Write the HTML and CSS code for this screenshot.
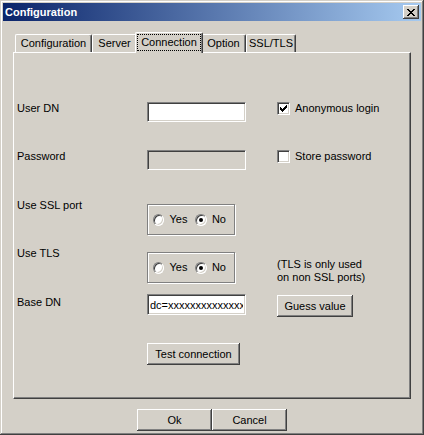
FILE: index.html
```html
<!DOCTYPE html>
<html lang="en">
  <head>
    <title>Configuration</title>
    <meta charset="utf-8" />
    <link rel="stylesheet" href="styles.css">
  </head>
  <body>
    <div class="window">
      <div class="titlebar">
        <span class="title">Configuration</span>
        <span class="close">
          <svg width="8" height="7" viewBox="0 0 8 7" shape-rendering="crispEdges">
            <path d="M0 0h2v1h-2z M6 0h2v1h-2z M1 1h2v1h-2z M5 1h2v1h-2z M2 2h4v1h-4z M3 3h2v1h-2z M2 4h4v1h-4z M1 5h2v1h-2z M5 5h2v1h-2z M0 6h2v1h-2z M6 6h2v1h-2z" fill="#000"/>
          </svg>
        </span>
      </div>

      <div class="client">
        <div class="tabs">
          <div class="tab tab-config">Configuration</div>
          <div class="tab tab-server">Server</div>
          <div class="tab active"><span class="focus">Connection</span></div>
          <div class="tab tab-option">Option</div>
          <div class="tab tab-ssl">SSL/TLS</div>
        </div>

        <div class="panel">
          <div class="row row-user">
            <span class="label">User DN</span>
            <input type="text" class="edit" value="">
            <span class="option">
              <span class="check">
                <svg width="7" height="7" viewBox="0 0 7 7" shape-rendering="crispEdges">
                  <path d="M0 2h1v3h-1z M1 3h1v3h-1z M2 4h1v3h-1z M3 3h1v3h-1z M4 2h1v3h-1z M5 1h1v3h-1z M6 0h1v3h-1z" fill="#000"/>
                </svg>
              </span>
              Anonymous login
            </span>
          </div>

          <div class="row row-password">
            <span class="label">Password</span>
            <input type="password" class="edit" disabled>
            <span class="option">
              <span class="check"></span>
              Store password
            </span>
          </div>

          <div class="row row-ssl">
            <span class="label">Use SSL port</span>
            <div class="group">
              <span class="radio"></span><span class="radio-text">Yes</span>
              <span class="radio on"></span><span class="radio-text">No</span>
            </div>
          </div>

          <div class="row row-tls">
            <span class="label">Use TLS</span>
            <div class="group">
              <span class="radio"></span><span class="radio-text">Yes</span>
              <span class="radio on"></span><span class="radio-text">No</span>
            </div>
            <span class="note">(TLS is only used<br>on non SSL ports)</span>
          </div>

          <div class="row row-base">
            <span class="label">Base DN</span>
            <input type="text" class="edit edit-base" value="dc=xxxxxxxxxxxxxxxxxxxx">
            <button type="button" class="btn btn-guess">Guess value</button>
          </div>

          <div class="row row-test">
            <span></span>
            <button type="button" class="btn btn-test">Test connection</button>
          </div>
        </div>

        <div class="buttons">
          <button type="button" class="btn btn-dialog">Ok</button>
          <button type="button" class="btn btn-dialog">Cancel</button>
        </div>
      </div>
    </div>
  </body>
</html>
```

FILE: styles.css
```css
 body {
   margin: 0;
   background: #d4d0c8;
   font-family: "Liberation Sans", Arial, sans-serif;
   font-size: 11px;
   color: #000;
 }

 .window {
   width: 424px;
   height: 435px;
   box-sizing: border-box;
   padding: 3px;
   background: #d4d0c8;
   overflow: hidden;
   box-shadow: inset -1px -1px #404040, inset 1px 1px #d4d0c8,
               inset -2px -2px #808080, inset 2px 2px #fff;
 }

 /* title bar */
 .titlebar {
   height: 18px;
   display: flex;
   align-items: center;
   background: linear-gradient(to right, #0a246a, #a6caf0);
 }

 .title {
   padding-left: 2px;
   color: #fff;
   font-weight: bold;
   font-size: 11px;
 }

 .close {
   margin-left: auto;
   margin-right: 2px;
   width: 16px;
   height: 14px;
   display: flex;
   align-items: center;
   justify-content: center;
   background: #d4d0c8;
   box-shadow: inset -1px -1px #404040, inset 1px 1px #fff, inset -2px -2px #808080;
 }

 .close svg {
   display: block;
 }

 .client {
   padding: 11px 10px 0 10px;
 }

 /* tabs */
 .tabs {
   height: 20px;
   display: flex;
   align-items: flex-end;
   padding-left: 2px;
 }

 .tab {
   height: 18px;
   box-sizing: border-box;
   border-top: 1px solid #fff;
   border-left: 1px solid #fff;
   border-right: 1px solid #404040;
   border-radius: 2px 2px 0 0;
   box-shadow: inset -1px 0 #808080;
   text-align: center;
   line-height: 17px;
 }

 .tab-config { width: 77px; }
 .tab-server { width: 45px; }
 .tab-option { width: 45px; }
 .tab-ssl { width: 50px; }

 .tab.active {
   position: relative;
   z-index: 1;
   width: 68px;
   height: 21px;
   margin: 0 -2px -1px -2px;
   background: #d4d0c8;
 }

 .focus {
   display: block;
   height: 17px;
   margin: 1px 1px 0 1px;
   border: 1px dotted #000;
   box-sizing: border-box;
   line-height: 15px;
 }

 /* panel */
 .panel {
   width: 398px;
   height: 347px;
   box-sizing: border-box;
   padding: 49px 0 0 3px;
   border-top: 1px solid #fff;
   border-left: 1px solid #fff;
   border-right: 1px solid #404040;
   border-bottom: 1px solid #404040;
   box-shadow: inset -1px -1px #808080;
 }

 .row {
   display: grid;
   grid-template-columns: 130px 130px 1fr;
   align-items: start;
 }

 .label {
   line-height: 13px;
 }

 .row-password { margin-top: 28px; }
 .row-ssl { margin-top: 29px; }
 .row-tls { margin-top: 12px; }
 .row-base { margin-top: 10px; }
 .row-test { margin-top: 26px; }

 .row-ssl .group,
 .row-tls .group {
   margin-top: 5px;
 }

 .row-base .label {
   margin-top: 2px;
 }

 /* edit fields */
 .edit {
   width: 99px;
   height: 20px;
   margin: 0;
   padding: 0 2px;
   box-sizing: border-box;
   border: 1px solid;
   border-color: #808080 #fff #fff #808080;
   box-shadow: inset 1px 1px #404040, inset -1px -1px #d4d0c8;
   background: #fff;
   font-family: "Liberation Sans", Arial, sans-serif;
   font-size: 11px;
   color: #000;
   outline: none;
 }

 .edit:disabled {
   background: #d4d0c8;
 }

 .edit-base {
   height: 21px;
 }

 /* checkboxes */
 .option {
   display: flex;
   align-items: flex-start;
   gap: 5px;
   line-height: 13px;
 }

 .check {
   width: 13px;
   height: 13px;
   box-sizing: border-box;
   border: 1px solid;
   border-color: #808080 #fff #fff #808080;
   box-shadow: inset 1px 1px #404040, inset -1px -1px #d4d0c8;
   background: #fff;
   display: flex;
   align-items: center;
   justify-content: center;
 }

 .check svg {
   display: block;
 }

 /* radio groups */
 .group {
   width: 88px;
   height: 31px;
   box-sizing: border-box;
   display: flex;
   align-items: center;
   padding-left: 5px;
   border: 1px solid #808080;
   box-shadow: inset 1px 1px #fff, 1px 1px 0 #fff;
 }

 .radio {
   position: relative;
   width: 12px;
   height: 12px;
   box-sizing: border-box;
   border-radius: 50%;
   border: 1px solid;
   border-color: #808080 #fff #fff #808080;
   box-shadow: inset 1px 1px #404040, inset -1px -1px #d4d0c8;
   background: #fff;
 }

 .radio.on::after {
   content: "";
   position: absolute;
   left: 3px;
   top: 3px;
   width: 4px;
   height: 4px;
   border-radius: 50%;
   background: #000;
 }

 .radio-text {
   margin-left: 5px;
   margin-right: 8px;
   line-height: 13px;
 }

 .note {
   margin-top: 11px;
   line-height: 13px;
 }

 /* buttons */
 .btn {
   margin: 0;
   padding: 0;
   height: 22px;
   border: none;
   background: #d4d0c8;
   box-shadow: inset -1px -1px #404040, inset 1px 1px #fff, inset -2px -2px #808080;
   font-family: "Liberation Sans", Arial, sans-serif;
   font-size: 11px;
   color: #000;
 }

 .btn-guess {
   width: 76px;
   margin-top: 1px;
 }

 .btn-test {
   width: 93px;
 }

 .buttons {
   display: flex;
   justify-content: center;
   margin-top: 10px;
 }

 .btn-dialog {
   width: 75px;
 }
```
